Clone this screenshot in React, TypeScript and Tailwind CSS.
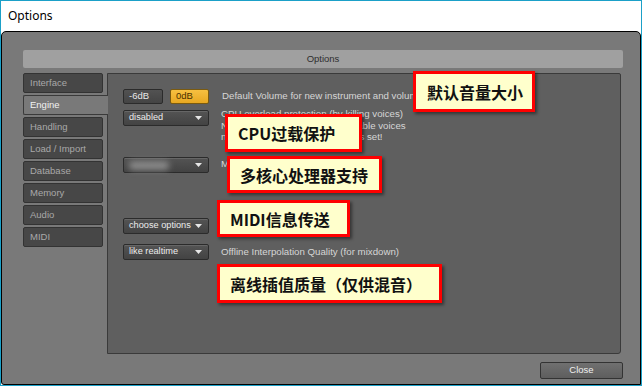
import React from 'react';

const ui = { fontFamily: '"Liberation Sans", Arial, sans-serif' };
const cjk = { fontFamily: '"Noto Sans CJK SC", "Noto Sans", sans-serif' };

const tabs = ['Interface', 'Engine', 'Handling', 'Load / Import', 'Database', 'Memory', 'Audio', 'MIDI'];

const Arrow = () => (
  <svg width="7" height="4" viewBox="0 0 7 4" className="shrink-0">
    <path d="M0 0 H7 L3.5 4 Z" fill="#e6e6e6" />
  </svg>
);

const Dropdown: React.FC<{ label?: string; blurred?: boolean }> = ({ label, blurred }) => (
  <div className="w-[86px] h-[16px] shrink-0 flex items-center justify-between pl-[5px] pr-[6px] rounded-[2px] border border-[#2b2b2b] bg-gradient-to-b from-[#545454] to-[#434343] shadow-[inset_0_1px_0_#666]">
    {blurred ? (
      <div className="w-[40px] h-[9px] bg-[#8a8a8a] blur-[3px] rounded" />
    ) : (
      <span className="text-[9.2px] text-[#ececec] leading-none whitespace-nowrap">{label}</span>
    )}
    <Arrow />
  </div>
);

const Note: React.FC<{ text: string; className: string }> = ({ text, className }) => (
  <div
    className={`absolute flex items-center pl-[10px] border-[3px] border-[#ff0000] bg-[#ffffcc] shadow-[2px_2px_3px_rgba(0,0,0,0.45)] text-[16px] font-bold text-[#111] whitespace-nowrap ${className}`}
    style={cjk}
  >
    {text}
  </div>
);

export default function App() {
  return (
    <div className="relative w-[642px] h-[386px] border border-[#1ba0c8] bg-white flex flex-col overflow-hidden" style={ui}>
      {/* window title */}
      <div className="h-[30px] shrink-0 flex items-center pl-[7px] text-[12px] text-black" style={{ fontFamily: '"Noto Sans", sans-serif' }}>
        Options
      </div>

      <div className="flex-1 flex flex-col bg-[#797979] border border-black rounded-t-[5px] rounded-bl-[3px] pl-[21px] pr-[17px] pt-[18px]">
        <div className="h-[18px] shrink-0 bg-[#a0a0a0] rounded-[2px] flex items-center justify-center text-[9.5px] text-[#2e2e2e]">
          Options
        </div>

        <div className="flex mt-[5px]">
          {/* sidebar */}
          <div className="w-[84px] shrink-0 flex flex-col gap-[2px]">
            {tabs.map((t) =>
              t === 'Engine' ? (
                <div
                  key={t}
                  className="relative z-10 h-[20px] w-[85px] flex items-center pl-[6px] text-[9.5px] text-[#f2f2f2] bg-[#797979] border-y border-l border-[#3a3a3a] rounded-l-[2px]"
                >
                  {t}
                </div>
              ) : (
                <div
                  key={t}
                  className="h-[20px] w-[80px] flex items-center pl-[6px] text-[9.5px] text-[#a9a9a9] bg-[#474747] border border-[#333] rounded-[2px]"
                >
                  {t}
                </div>
              )
            )}
          </div>

          {/* content */}
          <div className="w-[514px] h-[281px] bg-[#5f5f5f] border border-[#3a3a3a] rounded-tr-[2px] rounded-br-[3px] pl-[15px] pt-[15px] text-[9.7px] text-[#d6d6d6]">
            <div className="h-[21px] flex items-start">
              <div className="w-[86px] flex gap-[7px]">
                <div className="w-[40px] h-[15px] flex items-center pl-[5px] rounded-[2px] border border-[#2b2b2b] bg-gradient-to-b from-[#525252] to-[#444] text-[9.5px] text-[#e8e8e8]">
                  -6dB
                </div>
                <div className="w-[39px] h-[15px] flex items-center pl-[5px] rounded-[2px] border border-[#7a5a10] bg-gradient-to-b from-[#f7c040] to-[#e8a820] text-[9.5px] text-[#4a3000]">
                  0dB
                </div>
              </div>
              <span className="ml-[13px] leading-[13px] whitespace-nowrap">Default Volume for new instrument and volume</span>
            </div>

            <div className="h-[47px] flex items-start">
              <Dropdown label="disabled" />
              <div className="ml-[12px] -mt-[2px] leading-[11.5px]">
                <div>CPU overload protection (by killing voices)</div>
                <div>No. of voices limited to the available voices</div>
                <div>not to be used if this last option is set!</div>
              </div>
            </div>

            <div className="h-[61px] flex items-start">
              <Dropdown blurred />
              <span className="ml-[12px] leading-[13px]">Multiprocessor Support</span>
            </div>

            <div className="h-[26px] flex items-start">
              <Dropdown label="choose options" />
            </div>

            <div className="flex items-start">
              <Dropdown label="like realtime" />
              <span className="ml-[12px] leading-[15px]">Offline Interpolation Quality (for mixdown)</span>
            </div>
          </div>
        </div>

        <div className="flex justify-end mt-[8px]">
          <div className="w-[83px] h-[17px] flex items-center justify-center rounded-[2px] border border-[#333] bg-gradient-to-b from-[#707070] to-[#5e5e5e] text-[9.5px] text-[#f0f0f0]">
            Close
          </div>
        </div>
      </div>

      {/* annotations */}
      <Note text="默认音量大小" className="left-[412px] top-[70px] w-[122px] h-[41px] pl-[11px]" />
      <Note text="CPU过载保护" className="left-[224px] top-[113px] w-[137px] h-[38px]" />
      <Note text="多核心处理器支持" className="left-[226px] top-[155px] w-[155px] h-[37px]" />
      <Note text="MIDI信息传送" className="left-[216px] top-[199px] w-[133px] h-[37px]" />
      <Note text="离线插值质量（仅供混音）" className="left-[216px] top-[263px] w-[225px] h-[39px]" />
    </div>
  );
}
